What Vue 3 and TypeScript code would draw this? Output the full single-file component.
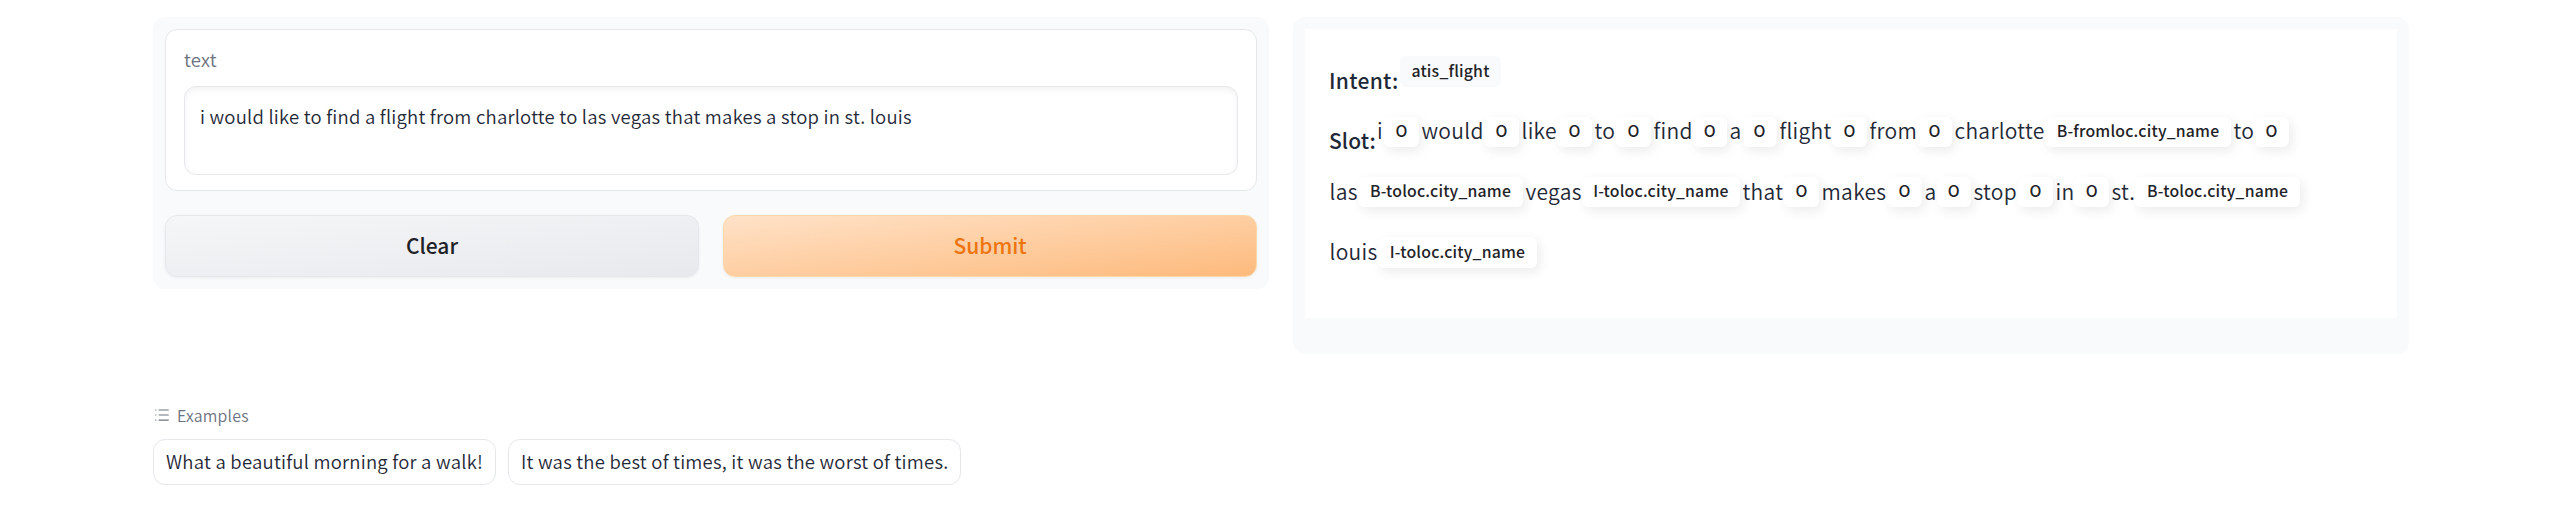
<script setup lang="ts">
interface Token { word: string; tag: string; width: number }

const lines: Token[][] = [
  [
    { word: 'i', tag: 'O', width: 44.5 },
    { word: 'would', tag: 'O', width: 100 },
    { word: 'like', tag: 'O', width: 73 },
    { word: 'to', tag: 'O', width: 59 },
    { word: 'find', tag: 'O', width: 76 },
    { word: 'a', tag: 'O', width: 50 },
    { word: 'flight', tag: 'O', width: 90 },
    { word: 'from', tag: 'O', width: 85 },
    { word: 'charlotte', tag: 'B-fromloc.city_name', width: 279 },
    { word: 'to', tag: 'O', width: 58 },
  ],
  [
    { word: 'las', tag: 'B-toloc.city_name', width: 196 },
    { word: 'vegas', tag: 'I-toloc.city_name', width: 217 },
    { word: 'that', tag: 'O', width: 79 },
    { word: 'makes', tag: 'O', width: 103 },
    { word: 'a', tag: 'O', width: 49 },
    { word: 'stop', tag: 'O', width: 82 },
    { word: 'in', tag: 'O', width: 56 },
    { word: 'st.', tag: 'B-toloc.city_name', width: 191 },
  ],
  [{ word: 'louis', tag: 'I-toloc.city_name', width: 210 }],
]
const tagWidths: Record<string, number> = {
  'O': 35,
  'B-fromloc.city_name': 186,
  'B-toloc.city_name': 165,
  'I-toloc.city_name': 159,
}
const examples: string[] = [
  'What a beautiful morning for a walk!',
  'It was the best of times, it was the worst of times.',
]
const query = 'i would like to find a flight from charlotte to las vegas that makes a stop in st. louis'
</script>

<template>
  <main class="page">
    <div class="columns">
      <section class="panel">
        <div class="card">
          <div class="label">text</div>
          <div class="field">{{ query }}</div>
        </div>
        <div class="buttons">
          <button class="btn clear">Clear</button>
          <button class="btn submit">Submit</button>
        </div>
      </section>
      <section class="panel">
        <div class="result">
          <div class="intent"><b class="name">Intent:</b><span class="tag flat">atis_flight</span></div>
          <div v-for="(line, n) in lines" :key="n" class="line">
            <b v-if="n === 0" class="name slot">Slot:</b>
            <span v-for="(t, i) in line" :key="i" class="token" :style="{ width: t.width + 'px' }">
              <span class="word">{{ t.word }}</span>
              <span class="tag" :style="{ width: tagWidths[t.tag] + 'px' }">{{ t.tag }}</span>
            </span>
          </div>
        </div>
      </section>
    </div>
    <div class="ex-label">
      <svg width="18" height="18" viewBox="0 0 32 32" fill="currentColor">
        <path d="M10 6h18v2H10zm0 18h18v2H10zm0-9h18v2H10zm-6 0h2v2H4zm0-9h2v2H4zm0 18h2v2H4z" />
      </svg>
      <span>Examples</span>
    </div>
    <div class="examples">
      <button v-for="e in examples" :key="e" class="example">{{ e }}</button>
    </div>
  </main>
</template>

<style>
body { margin: 0; background: #fff; }
</style>
<style scoped>
.page, .page * { box-sizing: border-box; }
.page { width: 2560px; height: 525px; padding: 17px 151px 0 153px; overflow: hidden; color: #1f2937; font-family: "Noto Sans CJK SC", "Noto Sans", sans-serif; font-weight: 350; }
button { font-family: inherit; margin: 0; }
.columns { display: flex; gap: 24px; align-items: flex-start; height: 383px; }
.panel { width: 1116px; padding: 12px; border-radius: 12px; background: #f9fafb; }
.panel:first-child { height: 272px; }
.panel + .panel { height: 337px; }
.card { height: 162px; border: 1px solid #e5e7eb; border-radius: 12px; background: #fff; padding: 17px 18px 0; }
.label { height: 39px; line-height: 24px; font-size: 18.5px; letter-spacing: .25px; color: #6b7280; }
.field { height: 89px; border: 1px solid #e5e7eb; border-radius: 12px; padding: 13px 15px; line-height: 32px; font-size: 18.5px; letter-spacing: .23px; box-shadow: inset 0 3px 6px rgba(0, 0, 0, .05); }
.buttons { display: flex; gap: 24px; margin-top: 24px; }
.btn { flex: 1; height: 62px; border: 1px solid #e5e7eb; border-radius: 12px; padding: 0 0 2px; font-size: 21px; font-weight: 500; line-height: 36px; box-shadow: 0 1px 3px rgba(0, 0, 0, .06); }
.clear { color: #1f2328; background: linear-gradient(to bottom right, #f5f6f7, #e7e9ed); }
.submit { color: #ee7410; border-color: #fed7aa; background: linear-gradient(to bottom right, #ffe2c8, #fdba7c); }
.result { height: 289px; padding: 27px 24px; background: #fff; }
.intent, .line { display: flex; height: 60px; white-space: nowrap; }
.intent { height: 61px; }
.name { width: 71px; font-size: 21px; font-weight: 500; line-height: 30px; padding-top: 9px; letter-spacing: .3px; }
.slot { width: 45.5px; margin-left: 2px; padding-top: 8px; letter-spacing: .1px; }
.line { margin-left: -2px; }
.token { display: flex; justify-content: space-between; padding-left: 2.5px; flex-shrink: 0; }
.word { font-size: 21px; line-height: 28px; letter-spacing: .3px; }
.slot ~ .token .word { line-height: 26px; }
.tag { height: 30px; border-radius: 6px; background: #fff; font-size: 15.8px; font-weight: 500; line-height: 28px; letter-spacing: .2px; text-align: center; box-shadow: 3px 4px 12px rgba(0, 0, 0, .08); color: #1f2328; }
.line:last-child .tag { height: 31px; line-height: 29px; }
.flat { width: 101px; height: 31px; line-height: 30px; background: #f9fafb; box-shadow: none; }
.ex-label { display: flex; align-items: center; gap: 6px; height: 30px; color: #6b7280; font-size: 15.9px; letter-spacing: .2px; }
.examples { display: flex; gap: 12px; margin-top: 9px; }
.example { height: 46px; padding: 0 12px 2px; border: 1px solid #e5e7eb; border-radius: 12px; background: #fff; color: #1f2937; font-size: 18.5px; font-weight: inherit; letter-spacing: .23px; line-height: 30px; white-space: nowrap; }
</style>
